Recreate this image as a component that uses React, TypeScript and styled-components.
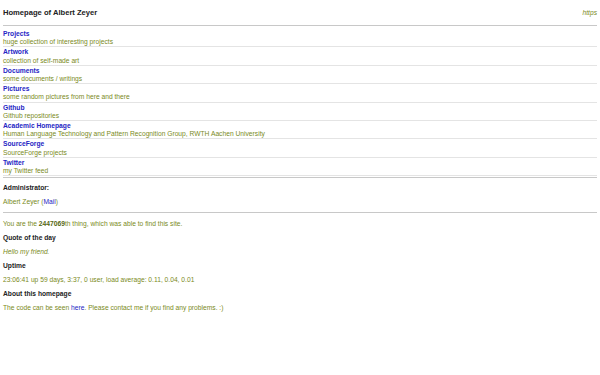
import React from "react";
import styled, { createGlobalStyle } from "styled-components";

const GlobalStyle = createGlobalStyle`
  html, body {
    margin: 0;
    padding: 0;
    background: #fff;
  }
  body {
    font-family: "Liberation Sans", Arial, sans-serif;
    font-size: 6.7px;
    line-height: 8px;
    color: #7a8a22;
  }
`;

const Page = styled.div`
  width: 594px;
  padding: 0 3px;
`;

const Header = styled.div`
  display: flex;
  justify-content: space-between;
  align-items: center;
  height: 24px;
  padding-top: 1px;
  border-bottom: 1px solid #c8c8c8;
`;

const Title = styled.h1`
  margin: 0;
  font-size: 7.6px;
  font-weight: bold;
  color: #222;
`;

const Proto = styled.span`
  font-style: italic;
  color: #7a8a22;
`;

const LinkList = styled.div`
  display: flex;
  flex-direction: column;
  padding-top: 4px;
  border-bottom: 1px solid #c8c8c8;
`;

const Row = styled.div`
  display: flex;
  flex-direction: column;
  border-bottom: 1px solid #e4e4e4;
  margin-bottom: 1px;
  line-height: 8.2px;
`;

const RowLink = styled.a`
  color: #2525c4;
  font-weight: bold;
  text-decoration: none;
`;

const Desc = styled.span``;

const Section = styled.div`
  padding-bottom: 6px;
  border-bottom: 1px solid #c8c8c8;
`;

const Heading = styled.div`
  color: #222;
  font-weight: bold;
  margin: 6px 0;
`;

const Text = styled.p<{ $italic?: boolean }>`
  margin: 0;
  font-style: ${(p) => (p.$italic ? "italic" : "normal")};
`;

const Count = styled.b`
  color: #556611;
`;

const InlineLink = styled.a`
  color: #2525c4;
  text-decoration: none;
`;

const Gap = styled.div<{ $h: number }>`
  height: ${(p) => p.$h}px;
`;

const links = [
  ["Projects", "huge collection of interesting projects"],
  ["Artwork", "collection of self-made art"],
  ["Documents", "some documents / writings"],
  ["Pictures", "some random pictures from here and there"],
  ["Github", "Github repositories"],
  ["Academic Homepage", "Human Language Technology and Pattern Recognition Group, RWTH Aachen University"],
  ["SourceForge", "SourceForge projects"],
  ["Twitter", "my Twitter feed"],
];

export default function App() {
  return (
    <Page>
      <GlobalStyle />
      <Header>
        <Title>Homepage of Albert Zeyer</Title>
        <Proto>https</Proto>
      </Header>
      <LinkList>
        {links.map(([name, desc]) => (
          <Row key={name}>
            <RowLink href="#">{name}</RowLink>
            <Desc>{desc}</Desc>
          </Row>
        ))}
      </LinkList>
      <Section>
        <Heading>Administrator:</Heading>
        <Text>
          Albert Zeyer (<InlineLink href="#">Mail</InlineLink>)
        </Text>
      </Section>
      <Gap $h={7} />
      <Text>
        You are the <Count>2447069</Count>th thing, which was able to find this site.
      </Text>
      <Heading>Quote of the day</Heading>
      <Text $italic>Hello my friend.</Text>
      <Heading>Uptime</Heading>
      <Text>23:06:41 up 59 days, 3:37, 0 user, load average: 0.11, 0.04, 0.01</Text>
      <Heading>About this homepage</Heading>
      <Text>
        The code can be seen <InlineLink href="#">here</InlineLink>. Please contact me if you find any problems. :)
      </Text>
    </Page>
  );
}
